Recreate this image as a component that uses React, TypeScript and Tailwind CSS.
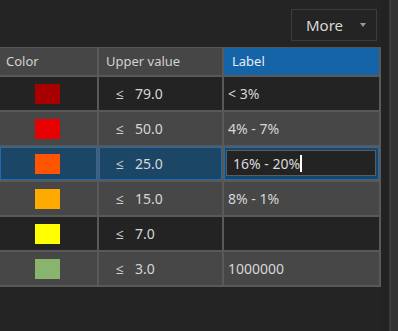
import { useState } from "react";

type Row = {
  color: string;
  upper: string;
  label: string;
  bg: string;
};

const rows: Row[] = [
  { color: "#a80000", upper: "79.0", label: "< 3%", bg: "bg-[#232323]" },
  { color: "#e60000", upper: "50.0", label: "4% - 7%", bg: "bg-[#474747]" },
  { color: "#ff5500", upper: "25.0", label: "16% - 20%", bg: "bg-[#1c4666]" },
  { color: "#ffaa00", upper: "15.0", label: "8% - 1%", bg: "bg-[#474747]" },
  { color: "#ffff00", upper: "7.0", label: "", bg: "bg-[#232323]" },
  { color: "#89b46d", upper: "3.0", label: "1000000", bg: "bg-[#474747]" },
];

const SELECTED = 2;

export default function App() {
  const [editValue, setEditValue] = useState(rows[SELECTED].label);

  return (
    <div
      className="flex w-[398px] h-[331px] bg-[#242424] overflow-hidden text-[#d6d6d6]"
      style={{ fontFamily: '"Noto Sans", "Open Sans", sans-serif' }}
    >
      <div className="flex flex-col w-[381px]">
        {/* toolbar */}
        <div className="flex justify-end items-start h-[47px] pt-[9px] pr-[4px]">
          <button className="flex items-center justify-between w-[86px] h-[32px] border border-[#3c3c3c] pl-[14px] pr-[10px] text-[15px] text-[#d8d8d8]">
            <span>More</span>
            <svg width="6" height="4" viewBox="0 0 6 4" className="mb-[1px]">
              <polygon points="0,0 6,0 3,4" fill="#9a9a9a" />
            </svg>
          </button>
        </div>

        {/* table */}
        <div className="flex flex-col border-t border-[#555555]">
          <div className="flex h-[29px] border-b-2 border-[#595959] text-[13px]">
            <div className="flex items-center w-[99px] pl-[6px] bg-[#464646] border-r-2 border-[#595959] text-[#d2d2d2]">
              Color
            </div>
            <div className="flex items-center w-[125px] pl-[7px] bg-[#464646] border-r-2 border-[#595959] text-[#d2d2d2]">
              Upper value
            </div>
            <div className="flex items-center w-[157px] pl-[8px] bg-[#1664a8] border-r-2 border-[#595959] text-[#e6eef6]">
              Label
            </div>
          </div>

          {rows.map((row, i) => {
            const selected = i === SELECTED;
            const cellRing = selected ? "shadow-[inset_0_0_0_1px_#1f6cb0]" : "";
            return (
              <div
                key={i}
                className={`flex h-[35px] border-b-2 border-[#595959] text-[14px] ${row.bg}`}
              >
                <div
                  className={`flex items-center w-[99px] pl-[35px] border-r-2 border-[#595959] ${cellRing}`}
                >
                  <div
                    className="w-[25px] h-[20px]"
                    style={{ backgroundColor: row.color }}
                  />
                </div>
                <div
                  className={`flex items-center w-[125px] pl-[17px] border-r-2 border-[#595959] ${cellRing}`}
                >
                  <span className="text-[#c8d0d8]">≤</span>
                  <span className="ml-[11px]">{row.upper}</span>
                </div>
                <div
                  className={`flex items-center w-[157px] border-r-2 border-[#595959] ${cellRing} ${
                    selected ? "pl-[2px] pr-[3px]" : "pl-[4px]"
                  }`}
                >
                  {selected ? (
                    <div className="flex items-center w-full h-[26px] mb-[1px] border border-[#5c5c5c] bg-[#232323] pl-[6px] text-[14px] text-[#dadada]">
                      <span>{editValue}</span>
                      <span className="w-[2px] h-[17px] bg-white" />
                      <input
                        className="hidden"
                        value={editValue}
                        onChange={(e) => setEditValue(e.target.value)}
                      />
                    </div>
                  ) : (
                    row.label
                  )}
                </div>
              </div>
            );
          })}
        </div>
      </div>

      {/* side strip */}
      <div className="w-[8px] bg-[#222222]" />
      <div className="w-[2px] bg-[#3a3a3a]" />
      <div className="flex-1 bg-[#323232]" />
    </div>
  );
}
